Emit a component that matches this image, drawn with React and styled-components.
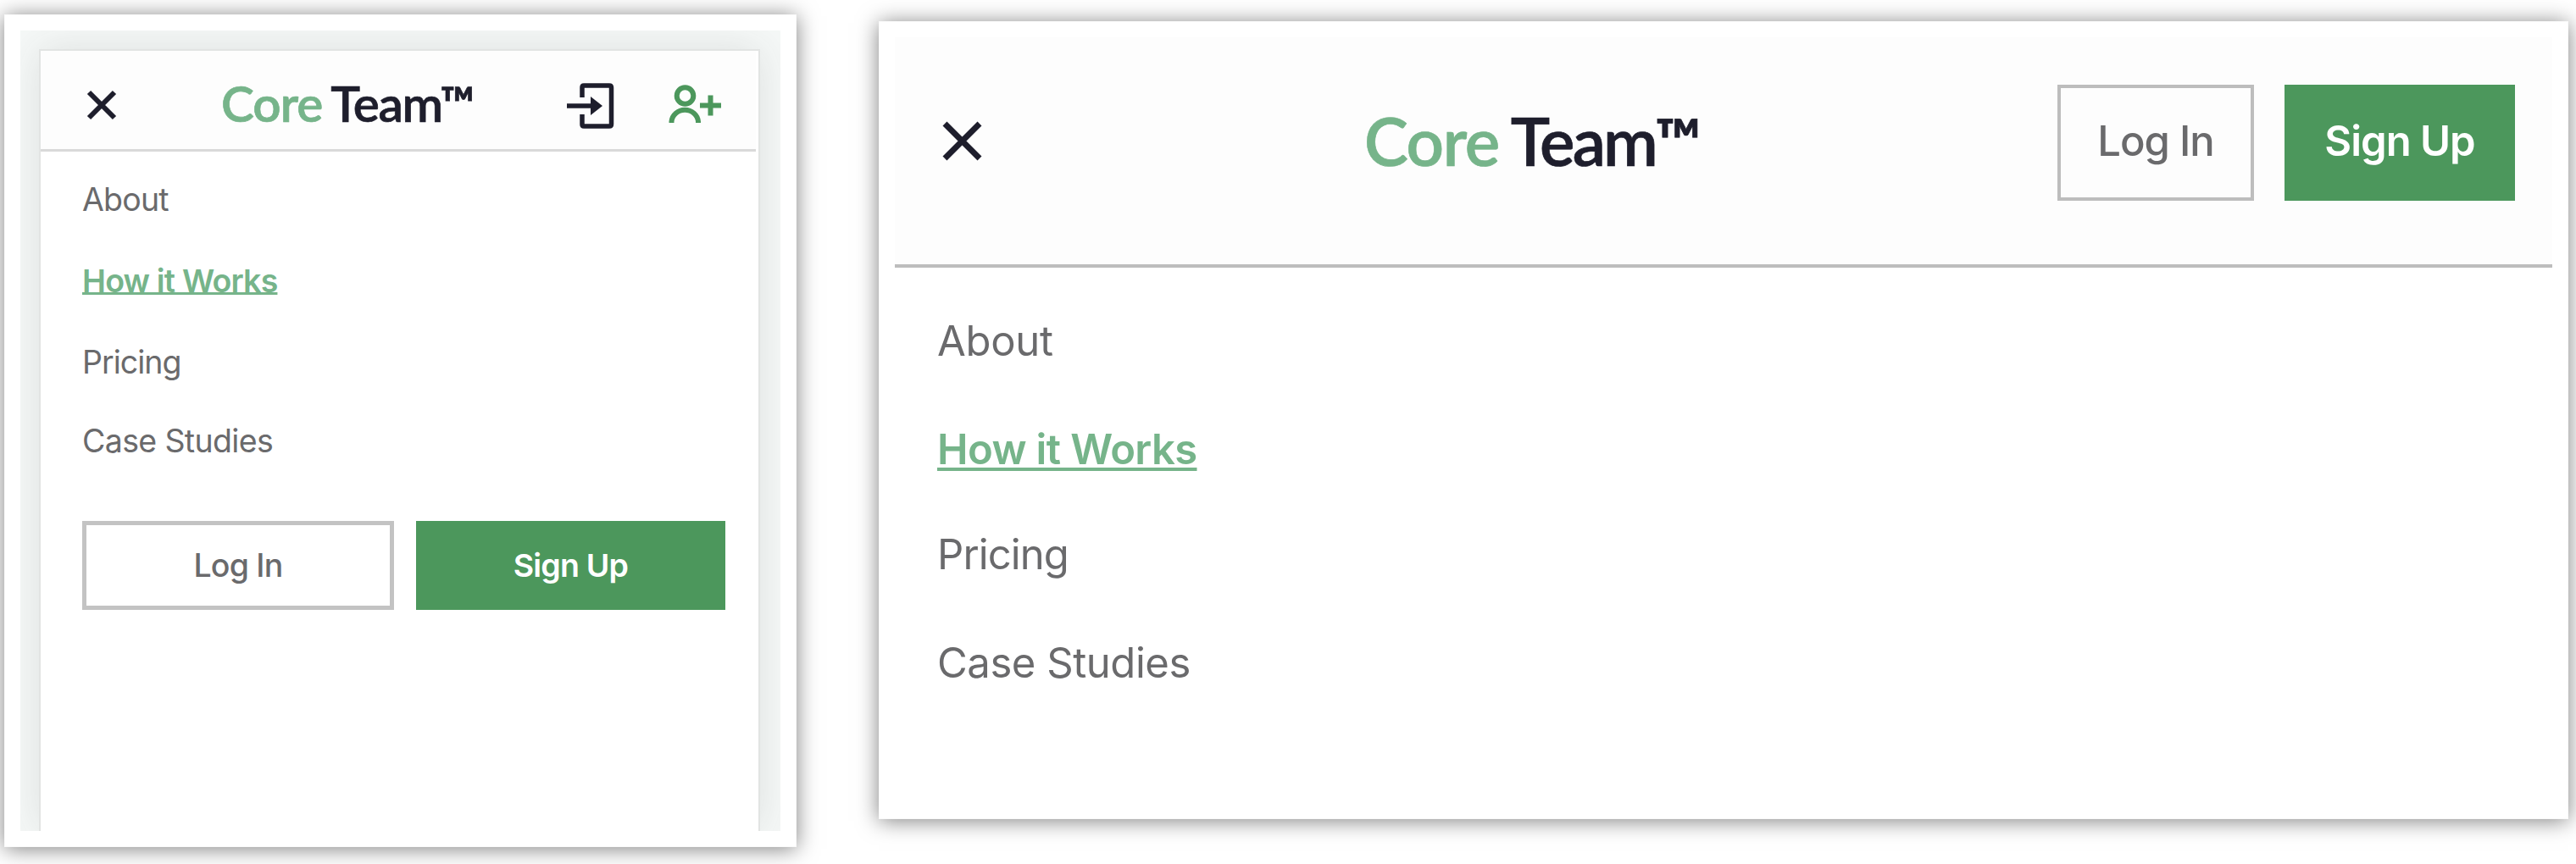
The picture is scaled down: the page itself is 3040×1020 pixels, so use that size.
import React from "react";
import styled, { createGlobalStyle } from "styled-components";

const colors = {
  green: "#4c975c",
  mint: "#76b48a",
  ink: "#1e1e2c",
  grey: "#6a6a6c",
  line: "#bdbdbd",
};

const GlobalStyle = createGlobalStyle`
  * { box-sizing: border-box; }
  body { margin: 0; background: #fff; overflow: hidden; }
`;

const Stage = styled.main`
  display: flex;
  align-items: flex-start;
  gap: 97px;
  width: 3040px;
  height: 1020px;
  padding-left: 5px;
  font-family: Inter, "Liberation Sans", sans-serif;
  color: ${colors.grey};
`;

const Frame = styled.section`
  flex: none;
  width: ${(p) => p.$width}px;
  height: ${(p) => p.$height}px;
  margin-top: ${(p) => p.$top}px;
  padding: 19px;
  background: #fff;
  box-shadow: inset 0 0 0 1px #fafafa, 0 2px 24px rgba(0, 0, 0, 0.5);
`;

const Backdrop = styled.div`
  height: 100%;
  padding: 22px 24px 0 22px;
  background: #f5f8f7;
  overflow: hidden;
`;

const Phone = styled.div`
  height: 100%;
  border: 2px solid #e2e4e3;
  border-bottom: 0;
  background: #fff;
  box-shadow: 0 0 44px rgba(60, 60, 60, 0.12);
`;

const Header = styled.header`
  display: flex;
  align-items: center;
  height: ${(p) => (p.$wide ? 272 : 119)}px;
  margin-right: ${(p) => (p.$wide ? 0 : 3)}px;
  padding: ${(p) => (p.$wide ? "0 44px 20px 56px" : "12px 38px 0 54px")};
  background: #fdfdfd;
  border-bottom: ${(p) => (p.$wide ? `4px solid ${colors.line}` : "3px solid #d9d9d9")};
`;

const IconButton = styled.button`
  display: flex;
  padding: 0;
  border: 0;
  background: none;
  color: ${(p) => p.$color || colors.ink};
  margin: ${(p) => p.$margin || 0};
`;

const Logo = styled.div`
  margin: ${(p) => (p.$wide ? "0 0 2px 451px" : "-5px 0 0 123px")};
  width: ${(p) => (p.$wide ? 397 : 298)}px;
  font-family: Lato, "Liberation Sans", sans-serif;
  font-weight: 600;
  font-size: ${(p) => (p.$wide ? 78 : 58.5)}px;
  letter-spacing: ${(p) => (p.$wide ? -1.4 : -1)}px;
  line-height: 1.2;
  white-space: nowrap;
  color: ${colors.mint};
  -webkit-text-stroke: 0.7px currentColor;
`;

const LogoTeam = styled.span`
  margin-left: ${(p) => (p.$wide ? -4 : -3.5)}px;
  letter-spacing: ${(p) => (p.$wide ? -2.8 : -1.4)}px;
  color: ${colors.ink};
`;

const Trademark = styled.span`
  margin-left: ${(p) => (p.$wide ? -1 : -2)}px;
  font-size: 0.93em;
  font-weight: 700;
  line-height: 0;
  vertical-align: 0.05em;
  letter-spacing: 0;
  color: ${colors.ink};
`;

const Actions = styled.div`
  display: flex;
  gap: ${(p) => (p.$wide ? 36 : 26)}px;
  margin: ${(p) => (p.$wide ? "0 0 0 auto" : "50px 36px 0 49px")};
`;

const Button = styled.button`
  display: flex;
  align-items: center;
  justify-content: center;
  width: ${(p) => p.$width}px;
  height: ${(p) => (p.$wide ? 137 : 105)}px;
  padding: ${(p) => (p.$wide ? "0 0 4px" : "0")};
  border: ${(p) => (p.$primary ? "0" : p.$wide ? `4px solid ${colors.line}` : "5px solid #c3c3c3")};
  background: ${(p) => (p.$primary ? colors.green : "transparent")};
  color: ${(p) => (p.$primary ? "#fff" : colors.grey)};
  font-family: inherit;
  font-size: ${(p) => (p.$wide ? 49 : 37.5)}px;
  font-weight: ${(p) => (p.$primary ? 600 : 500)};
  letter-spacing: ${(p) => (p.$wide ? -1 : -0.8)}px;
  white-space: nowrap;
`;

const Nav = styled.nav`
  display: grid;
  grid-template-rows: ${(p) => (p.$wide ? "126px 130px 118px 138px" : "95px 96px 96px 90px")};
  align-items: center;
  justify-items: start;
  padding: ${(p) => (p.$wide ? "23px 0 0 50px" : "9px 0 0 49px")};
  font-size: ${(p) => (p.$wide ? 49 : 37.5)}px;
`;

const NavLink = styled.a`
  letter-spacing: ${(p) => p.$tracking}px;
  font-weight: ${(p) => (p.$active ? 600 : 400)};
  color: ${(p) => (p.$active ? colors.mint : colors.grey)};
  text-decoration: ${(p) => (p.$active ? "underline" : "none")};
  text-decoration-thickness: ${(p) => (p.$wide ? 4 : 3)}px;
  text-underline-offset: ${(p) => (p.$wide ? 4 : 0)}px;
  text-decoration-skip-ink: none;
  white-space: nowrap;
`;

const links = [
  { label: "About", tracking: [-0.8, -0.3] },
  { label: "How it Works", active: true, tracking: [-0.82, -0.62] },
  { label: "Pricing", tracking: [-1, -0.9] },
  { label: "Case Studies", tracking: [-0.65, -0.45] },
];

function CloseIcon({ size, stroke }) {
  return (
    <svg width={size} height={size} viewBox={`0 0 ${size} ${size}`}>
      <path
        d={`M3 3 L${size - 3} ${size - 3} M${size - 3} 3 L3 ${size - 3}`}
        stroke="currentColor"
        strokeWidth={stroke}
      />
    </svg>
  );
}

function LoginIcon() {
  return (
    <svg width="56" height="54" viewBox="0 0 56 54" fill="none">
      <path
        d="M18 17 V5 Q18 3 20 3 H50 Q52.500 3 52.500 5.500 V48.500 Q52.500 51 50 51 H20 Q18 51 18 49 V37"
        stroke="currentColor"
        strokeWidth="5.500"
      />
      <path d="M0 27 H34" stroke="currentColor" strokeWidth="5.500" />
      <path d="M28 16 L42 27 L28 38 Z" fill="currentColor" />
    </svg>
  );
}

function SignupIcon() {
  return (
    <svg width="62" height="46" viewBox="0 0 62 46" fill="none" stroke="currentColor" strokeWidth="6">
      <circle cx="19.500" cy="13" r="9.800" />
      <path d="M3.500 45 V43.500 A15.800 15 0 0 1 35 43.500 V45" />
      <path d="M37 24.500 H62 M49.500 12.500 V36.500" />
    </svg>
  );
}

function Menu({ wide }) {
  return (
    <Nav $wide={wide}>
      {links.map((l) => (
        <NavLink key={l.label} $wide={wide} $active={l.active} $tracking={l.tracking[wide ? 1 : 0]}>
          {l.label}
        </NavLink>
      ))}
    </Nav>
  );
}

function Brand({ wide }) {
  return (
    <Logo $wide={wide}>
      Core <LogoTeam $wide={wide}>Team</LogoTeam>
      <Trademark $wide={wide}>™</Trademark>
    </Logo>
  );
}

export default function App() {
  return (
    <>
      <GlobalStyle />
      <Stage>
        <Frame $width={935} $height={983} $top={17}>
          <Backdrop>
            <Phone>
              <Header>
                <IconButton aria-label="Close">
                  <CloseIcon size={36} stroke={6} />
                </IconButton>
                <Brand />
                <IconButton $margin="1px 0 0 110px" aria-label="Log In">
                  <LoginIcon />
                </IconButton>
                <IconButton $margin="0 0 2px 64px" $color={colors.green} aria-label="Sign Up">
                  <SignupIcon />
                </IconButton>
              </Header>
              <Menu />
              <Actions>
                <Button $width={368}>Log In</Button>
                <Button $width={365} $primary>
                  Sign Up
                </Button>
              </Actions>
            </Phone>
          </Backdrop>
        </Frame>
        <Frame $width={1994} $height={942} $top={25}>
          <Header $wide>
            <IconButton $margin="0 0 4px" aria-label="Close">
              <CloseIcon size={47} stroke={7} />
            </IconButton>
            <Brand wide />
            <Actions $wide>
              <Button $wide $width={232}>
                Log In
              </Button>
              <Button $wide $width={272} $primary>
                Sign Up
              </Button>
            </Actions>
          </Header>
          <Menu wide />
        </Frame>
      </Stage>
    </>
  );
}
